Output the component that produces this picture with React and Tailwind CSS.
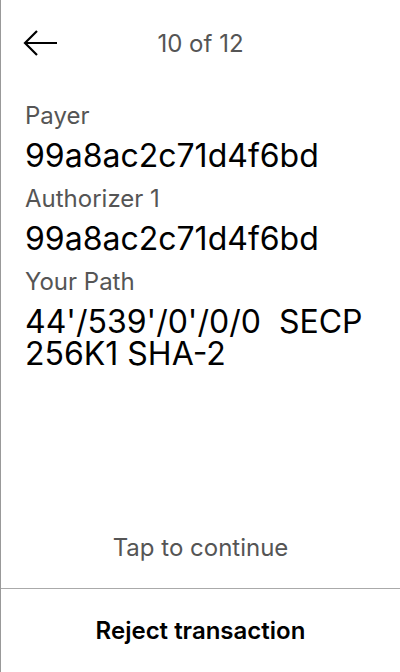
const FIELDS = [
  { label: 'Payer', value: '99a8ac2c71d4f6bd' },
  { label: 'Authorizer 1', value: '99a8ac2c71d4f6bd' },
  { label: 'Your Path', value: "44'/539'/0'/0/0\u00a0 SECP 256K1 SHA-2" },
]

export default function App() {
  return (
    <div className="w-[400px] h-[672px] bg-white border-l border-[#999] flex flex-col text-black font-['Inter',sans-serif]">
      <div className="relative h-[88px] flex items-center justify-center">
        <button className="absolute left-[22px] top-[29px]">
          <svg width="36" height="28" viewBox="0 0 36 28" fill="none" stroke="black" strokeWidth="2.2">
            <path d="M34 14H3M14 2L2 14l12 12" />
          </svg>
        </button>
        <span className="text-[24px] text-[#555]">10 of 12</span>
      </div>

      <div className="px-[24px] pt-[12px] flex flex-col gap-[11px]">
        {FIELDS.map((f) => (
          <div key={f.label} className="flex flex-col">
            <span className="text-[24px] leading-[32px] text-[#555] mb-[8px]">{f.label}</span>
            <span className="text-[32px] leading-[32px]">{f.value}</span>
          </div>
        ))}
      </div>

      <div className="flex-1" />
      <div className="text-center text-[24px] leading-[32px] text-[#555] pb-[24px]">Tap to continue</div>
      <div className="border-t border-[#aaa] h-[84px] flex items-center justify-center">
        <span className="text-[24px] font-semibold">Reject transaction</span>
      </div>
    </div>
  )
}
